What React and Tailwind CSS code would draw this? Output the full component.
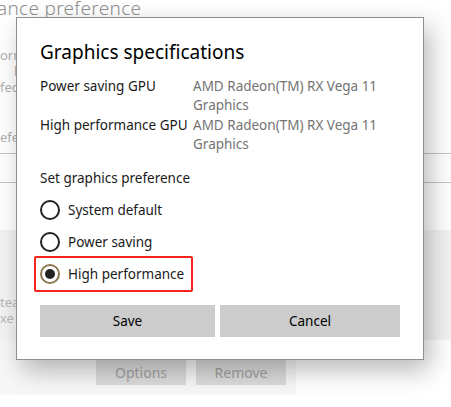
import React from "react";

const font = { fontFamily: '"Noto Sans", "Open Sans", sans-serif' };

const gpus = [
  { label: "Power saving GPU", value: ["AMD Radeon(TM) RX Vega 11", "Graphics"] },
  { label: "High performance GPU", value: ["AMD Radeon(TM) RX Vega 11", "Graphics"] },
];

const options = ["System default", "Power saving", "High performance"];

function Radio({ checked }) {
  if (checked) {
    return (
      <span className="flex h-5 w-5 items-center justify-center rounded-full border-2 border-[#8c7a4f]">
        <span className="h-2.5 w-2.5 rounded-full bg-[#222]" />
      </span>
    );
  }
  return <span className="h-5 w-5 rounded-full border-2 border-[#222]" />;
}

function Background() {
  return (
    <div className="flex h-full flex-col text-[#a8a8a8]">
      <div className="-ml-[3px] -mt-[6px] h-[28px] text-[19px] font-light leading-[28px] tracking-[0.3px] text-[#8f8f8f]">
        ance preference
      </div>
      <div className="mt-[25px] flex h-[48px] flex-col text-[13px] leading-[16px] text-[#b0b0b0]">
        <span>orm</span>
        <span className="pl-[14px]">be</span>
        <span>fec</span>
      </div>
      <div className="mt-[34px] h-[16px] text-[13px] leading-[16px] text-[#b0b0b0]">efe</div>
      <div className="mt-[8px] h-[30px] shrink-0 border-y border-[#c4c4c4]" />
      <div className="mt-[47px] flex h-[110px] shrink-0 flex-col bg-[#f3f3f3] pt-[64px] text-[13px] leading-[16px] text-[#b8b8b8]">
        <span>tea</span>
        <span>xe</span>
      </div>
      <div className="flex h-[55px] w-[296px] shrink-0 gap-[10px] bg-[#f7f7f7] pl-[96px] pt-[20px]">
        <div className="flex h-[25px] w-[90px] items-center justify-center bg-[#dcdcdc] text-[14px] text-[#a0a0a0]">
          Options
        </div>
        <div className="flex h-[25px] w-[90px] items-center justify-center bg-[#dcdcdc] text-[14px] text-[#a0a0a0]">
          Remove
        </div>
      </div>
    </div>
  );
}

function Dialog() {
  return (
    <div className="absolute left-[16px] top-[17px] h-[343px] w-[408px] border border-[#8f8f8f] bg-white px-[23px] pt-[20px] text-[#1a1a1a] shadow-[6px_10px_24px_rgba(0,0,0,0.28)]">
      <h2 className="text-[19px] leading-[28px] text-black">Graphics specifications</h2>
      <div className="mt-[11px] flex flex-col gap-[1px] text-[13.5px] leading-[19px]">
        {gpus.map((g) => (
          <div key={g.label} className="flex">
            <div className="w-[153px] shrink-0 text-[#1a1a1a]">{g.label}</div>
            <div className="text-[#737373]">
              {g.value.map((v) => (
                <div key={v}>{v}</div>
              ))}
            </div>
          </div>
        ))}
      </div>
      <div className="mt-[14px] text-[13.5px] leading-[20px]">Set graphics preference</div>
      <div className="mt-[12px] flex flex-col gap-[12px]">
        {options.map((o, i) => {
          const checked = i === 2;
          return (
            <div
              key={o}
              className={
                checked
                  ? "-mx-[6px] -my-[8px] flex w-[159px] items-center gap-[8px] rounded-[2px] border-2 border-[#f5241d] px-[4px] py-[6px]"
                  : "flex items-center gap-[8px]"
              }
            >
              <Radio checked={checked} />
              <span className="text-[13.5px] leading-[20px]">{o}</span>
            </div>
          );
        })}
      </div>
      <div className="mt-[21px] flex gap-[5px]">
        <button className="h-[32px] w-[175px] bg-[#cccccc] text-[13.5px] text-black">Save</button>
        <button className="h-[32px] w-[180px] bg-[#cccccc] text-[13.5px] text-black">Cancel</button>
      </div>
    </div>
  );
}

export default function App() {
  return (
    <div className="relative h-[407px] w-[451px] overflow-hidden bg-white" style={font}>
      <Background />
      <Dialog />
    </div>
  );
}
